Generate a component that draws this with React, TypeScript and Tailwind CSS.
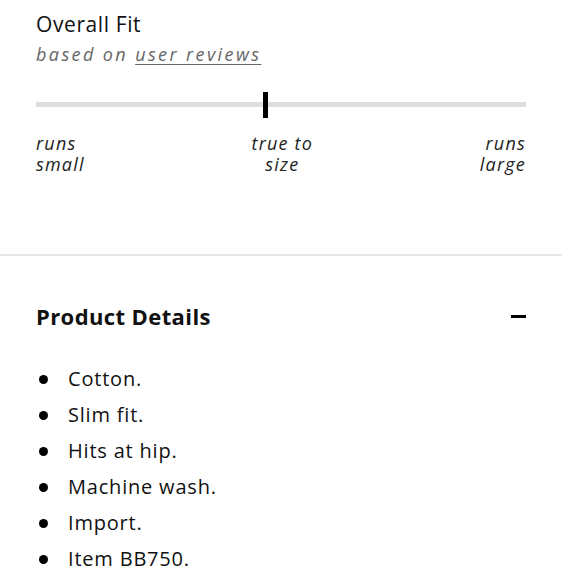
export default function App() {
    const details = ['Cotton.', 'Slim fit.', 'Hits at hip.', 'Machine wash.', 'Import.', 'Item BB750.']

    return (
        <div className="w-[562px] bg-white text-[#111] font-['Open_Sans',_sans-serif]">
            {/* Overall fit */}
            <div className="px-[36px] pt-[10px] pb-[80px]">
                <div className="text-[21px] leading-[28px] tracking-[0.6px]">Overall Fit</div>
                <div className="mt-[3px] text-[18px] leading-[26px] italic tracking-[2.4px] text-[#666]">
                    based on <span className="underline underline-offset-[3px]">user reviews</span>
                </div>

                <div className="relative mt-[25px] h-[26px]">
                    <div className="absolute left-0 right-0 top-[10px] h-[5px] bg-[#dddddd]" />
                    <div className="absolute left-[227px] top-0 h-[26px] w-[5px] bg-black" />
                </div>

                <div className="mt-[15px] flex justify-between text-[18px] leading-[20.5px] italic tracking-[1.2px] text-[#222]">
                    <div>runs<br />small</div>
                    <div className="text-center">true to<br />size</div>
                    <div className="text-right">runs<br />large</div>
                </div>
            </div>

            <div className="h-[2px] bg-[#e6e6e6]" />

            {/* Product details */}
            <div className="px-[36px] pt-[45px]">
                <div className="flex items-center justify-between">
                    <h2 className="text-[22px] leading-[30px] font-bold tracking-[0.4px]">Product Details</h2>
                    <div className="h-[3px] w-[15px] bg-black" />
                </div>

                <ul className="mt-[30px]">
                    {details.map((item) => (
                        <li key={item} className="flex items-center h-[36px] text-[20px] tracking-[0.8px]">
                            <span className="ml-[3px] w-[9px] h-[9px] rounded-full bg-black" />
                            <span className="ml-[20px]">{item}</span>
                        </li>
                    ))}
                </ul>
            </div>
        </div>
    )
}
